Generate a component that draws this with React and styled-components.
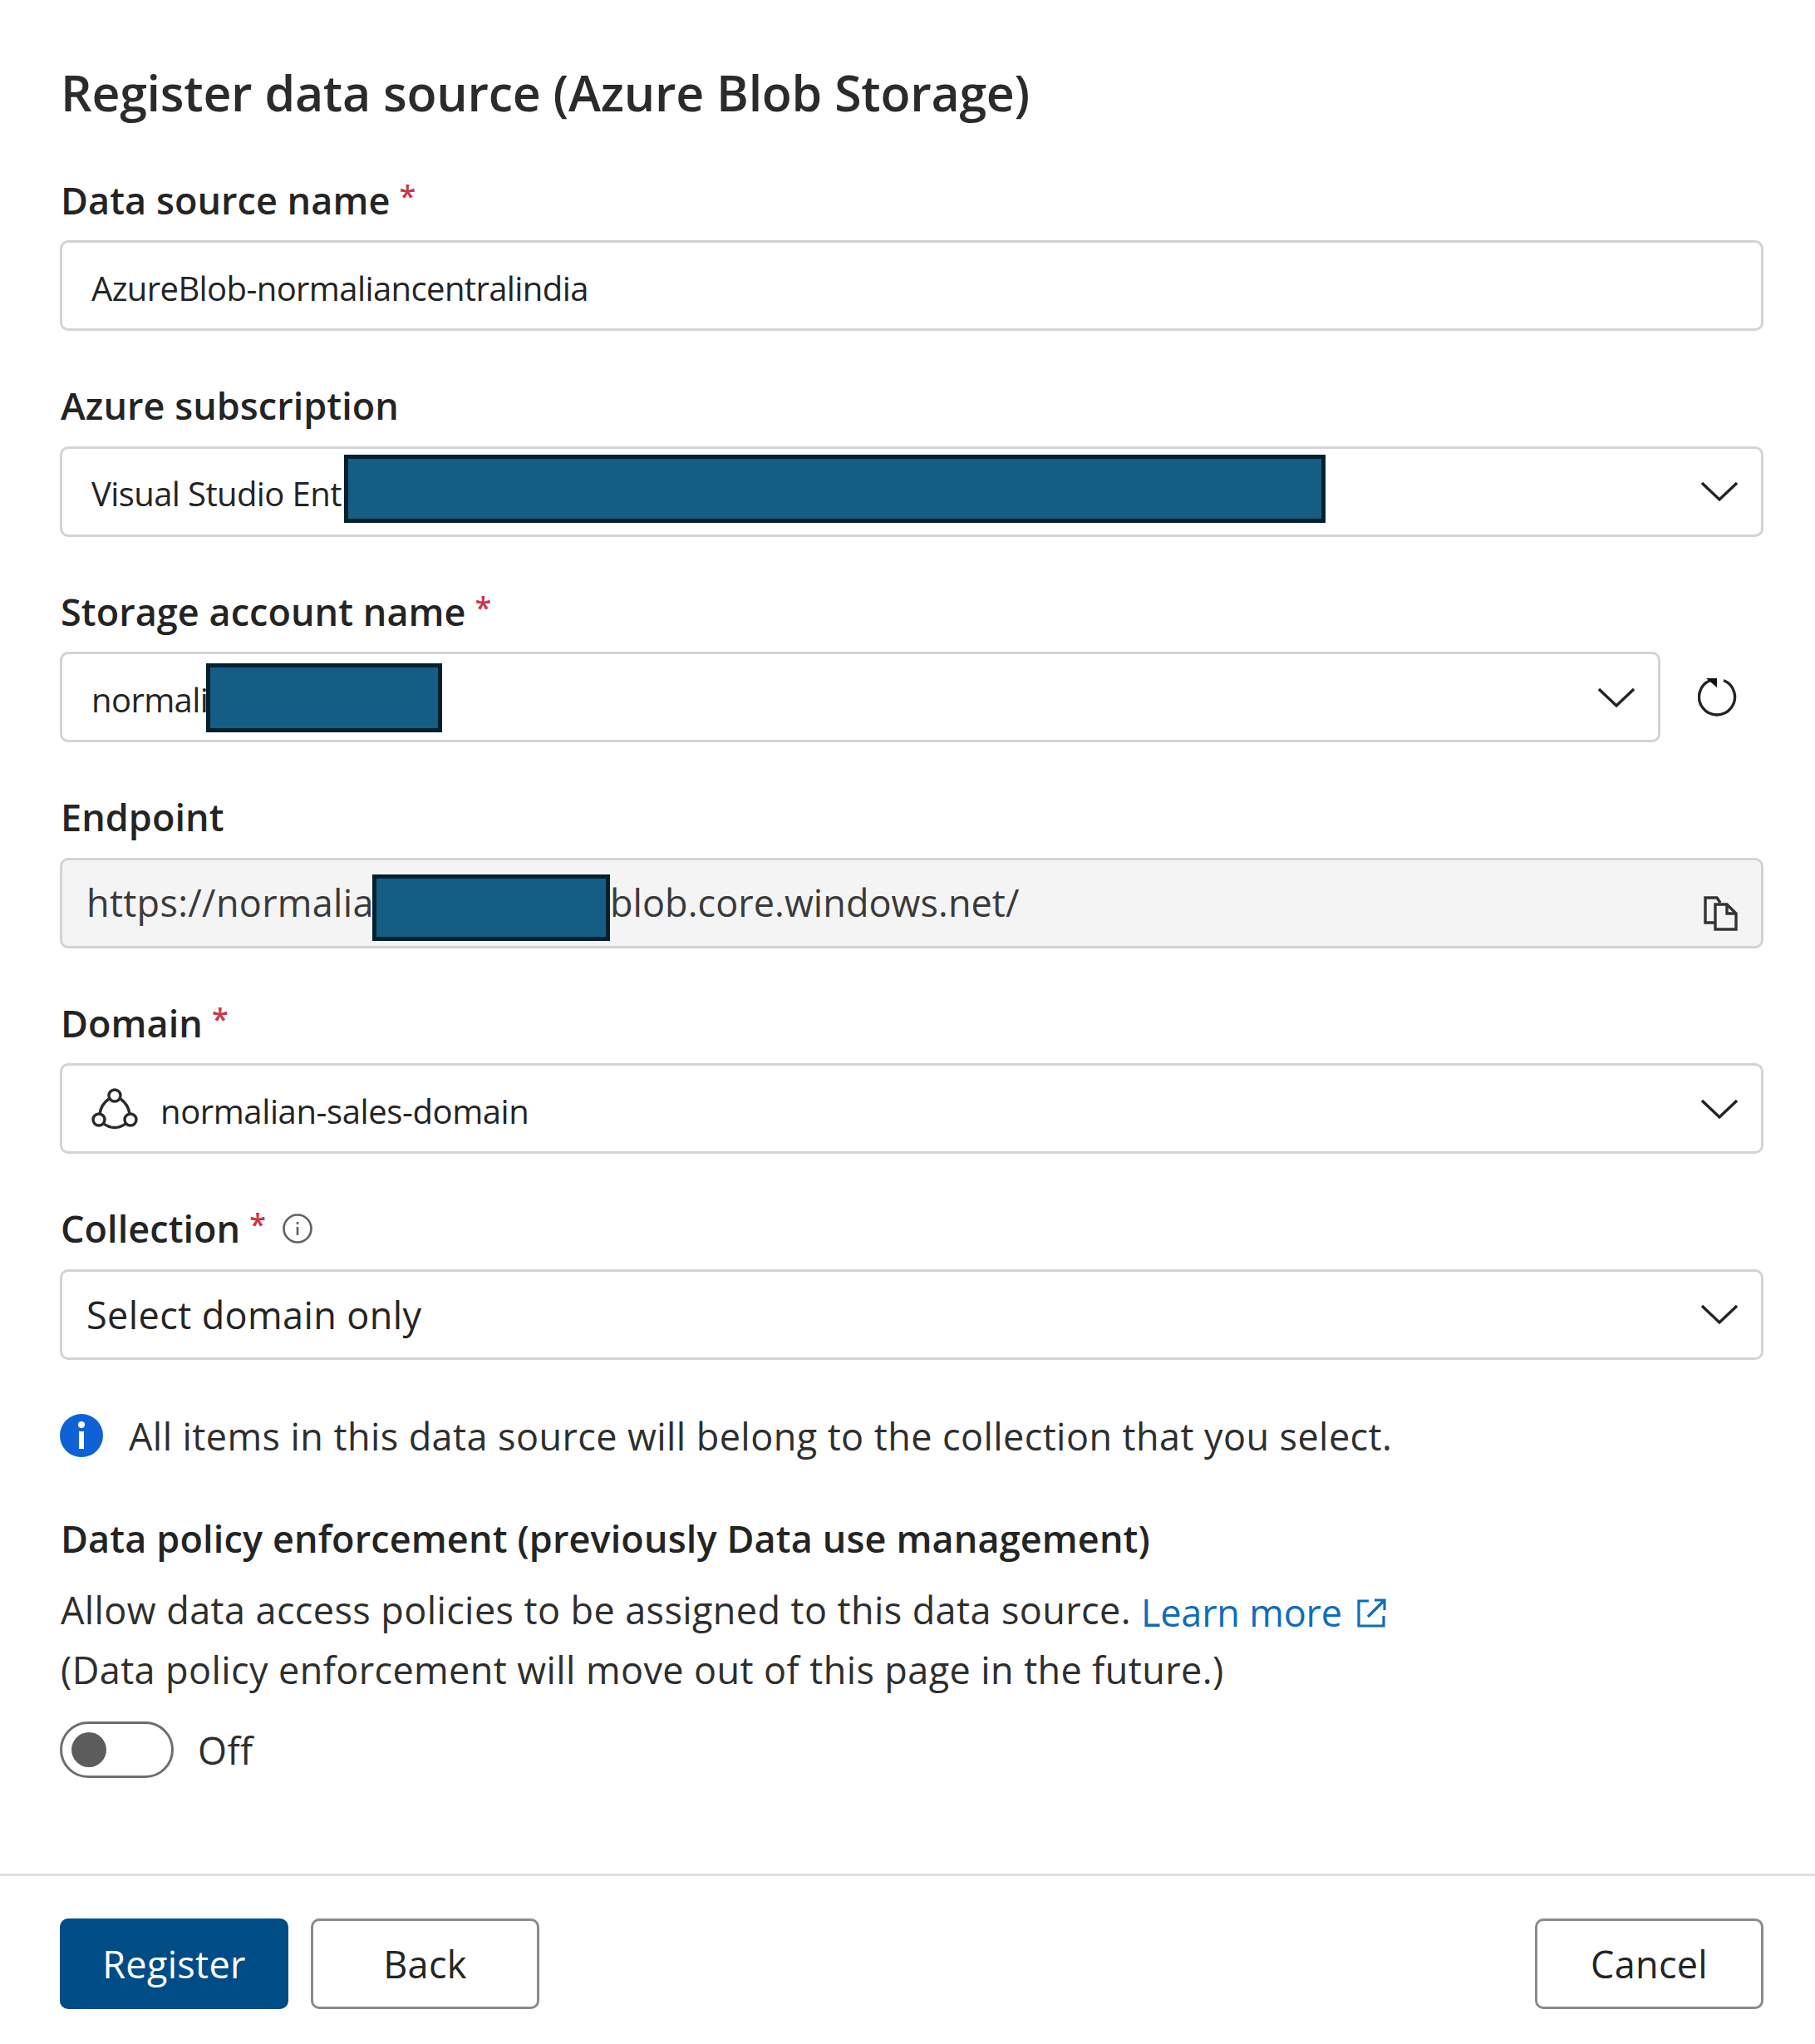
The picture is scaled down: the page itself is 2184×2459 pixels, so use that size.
import React from "react";
import styled, { createGlobalStyle } from "styled-components";

const Global = createGlobalStyle`
  html, body { margin: 0; padding: 0; background: #fff; }
  * { box-sizing: border-box; }
  body { font-family: "Open Sans", "Noto Sans", "Liberation Sans", sans-serif; color: #242424; }
`;

const Page = styled.div`
  width: 2184px;
  height: 2459px;
  background: #fff;
  overflow: hidden;
`;
const Body = styled.div`
  padding: 78px 62px 0 72px;
`;
const Title = styled.h1`
  margin: 0 0 71px 1px;
  font-size: 59px;
  line-height: 66px;
  font-weight: 600;
  color: #2b2b2b;
  letter-spacing: -0.25px;
`;
const Group = styled.div`
  margin-bottom: ${(p) => p.$after || 64.5}px;
`;
const Label = styled.label`
  display: flex;
  align-items: center;
  height: 50px;
  margin: 0 0 24px 1px;
  font-size: 45px;
  font-weight: 600;
  color: #242424;
  letter-spacing: 0.05px;
`;
const Star = styled.span`
  color: #c8374a;
  margin-left: 11px;
  position: relative;
  top: -5px;
  font-size: 36px;
`;
const SelectRow = styled.div`
  display: flex;
  align-items: center;
  gap: 45px;
`;
const Field = styled.div`
  position: relative;
  flex: 1;
  height: 109px;
  display: flex;
  align-items: center;
  gap: ${(p) => p.$gap || 0}px;
  padding: 0 28px 0 ${(p) => p.$left || 35}px;
  border: 3px solid #d3d3d3;
  border-radius: 10px;
  background: ${(p) => (p.$muted ? "#f4f4f4" : "#fff")};
  font-size: ${(p) => p.$size || 40}px;
  color: ${(p) => (p.$muted ? "#3a3a3a" : "#242424")};
  letter-spacing: ${(p) => p.$track ?? -0.6}px;
`;
const Value = styled.span`
  flex: 1;
  white-space: nowrap;
  padding-top: ${(p) => p.$drop || 0}px;
  margin-top: ${(p) => p.$lift || 0}px;
`;
const Suffix = styled.span`
  position: absolute;
  left: 659px;
  margin-top: -2px;
  white-space: nowrap;
  letter-spacing: 0.05px;
`;
const Redaction = styled.div`
  position: absolute;
  background: #155e83;
  border: 5px solid #04202f;
`;
const Icon = styled.svg`
  flex: none;
  display: block;
`;
const CopyIcon = styled(Icon)`
  margin: 26px 0 0 0;
`;
const InfoOutlineIcon = styled(Icon)`
  margin-left: 20px;
`;
const RefreshButton = styled.button`
  flex: none;
  width: 49px;
  height: 49px;
  margin-right: 30px;
  padding: 0;
  border: 0;
  background: none;
`;
const Note = styled.div`
  display: flex;
  align-items: center;
  gap: 31px;
  height: 50px;
  font-size: 45px;
  letter-spacing: 0.42px;
  color: #2e2e2e;
`;
const Heading = styled.h2`
  margin: 74px 0 25px 1px;
  font-size: 45px;
  line-height: 50px;
  font-weight: 600;
  color: #242424;
  letter-spacing: 0.13px;
`;
const Para = styled.p`
  margin: 0 0 0 1px;
  font-size: 45px;
  line-height: 72px;
  letter-spacing: 0.4px;
  color: #2e2e2e;
`;
const Link = styled.a`
  color: #0f6cbd;
  display: inline-flex;
  align-items: center;
  gap: 18px;
  line-height: 40px;
  letter-spacing: -0.2px;
  vertical-align: -3px;
`;
const ToggleRow = styled.div`
  display: flex;
  align-items: center;
  gap: 29px;
  margin-top: 26px;
  font-size: 45px;
  letter-spacing: 0.4px;
  color: #2e2e2e;
`;
const Track = styled.div`
  width: 137px;
  height: 68px;
  border: 3px solid #6e6e6e;
  border-radius: 34px;
  padding: 10px 11px;
`;
const Knob = styled.div`
  width: 42px;
  height: 42px;
  border-radius: 50%;
  background: #5c5c5c;
`;
const Footer = styled.div`
  margin-top: 115px;
  border-top: 3px solid #e0e0e0;
  padding: 51px 62px 0 72px;
  display: flex;
  gap: 27px;
`;
const Button = styled.button`
  width: 275px;
  height: 109px;
  border-radius: 10px;
  font: 400 45px "Open Sans", sans-serif;
  letter-spacing: 0.3px;
  border: 3px solid ${(p) => (p.$primary ? "#004c87" : "#8a8a8a")};
  background: ${(p) => (p.$primary ? "#004c87" : "#fff")};
  color: ${(p) => (p.$primary ? "#fff" : "#242424")};
  margin-left: ${(p) => (p.$end ? "auto" : 0)};
`;

const Chevron = () => (
  <Icon width="44" height="26" viewBox="0 0 44 26" fill="none" stroke="#242424" strokeWidth="3.4">
    <path d="M1 3l21 20 21-20" />
  </Icon>
);

const Refresh = () => (
  <Icon width="49" height="49" viewBox="0 0 49 49" fill="none" stroke="#242424" strokeWidth="3.4">
    <path d="M31 4.5a21.5 21.5 0 1 1-16 0" />
    <path d="M10 2h13v11z" fill="#111" stroke="none" />
  </Icon>
);

const Copy = () => (
  <CopyIcon width="41" height="42" viewBox="0 0 41 42" fill="none" stroke="#333" strokeWidth="3.4">
    <path d="M13 32H2V2h14l4 6" />
    <path d="M14 10h14l11 11v19H14z" fill="#f4f4f4" />
    <path d="M28 10v11h11" />
  </CopyIcon>
);

const DomainIcon = () => (
  <Icon width="56" height="50" viewBox="0 0 56 50" fill="none" stroke="#2b2b2b" strokeWidth="3.4">
    <circle cx="28" cy="9" r="7" />
    <circle cx="9" cy="38" r="7" />
    <circle cx="47" cy="38" r="7" />
    <path d="M21 13C14 18 11 24 10 31M35 13c7 5 10 11 11 18M15 43c8 6 18 6 26 0" />
  </Icon>
);

const InfoOutline = () => (
  <InfoOutlineIcon width="36" height="36" viewBox="0 0 36 36" fill="none" stroke="#616161" strokeWidth="2.6">
    <circle cx="18" cy="18" r="16.5" />
    <path d="M18 16v10M18 10v3" />
  </InfoOutlineIcon>
);

const InfoFilled = () => (
  <Icon width="52" height="52" viewBox="0 0 52 52">
    <circle cx="26" cy="26" r="26" fill="#0f62d6" />
    <rect x="23" y="21" width="6" height="21" fill="#fff" />
    <circle cx="26" cy="13" r="4" fill="#fff" />
  </Icon>
);

const External = () => (
  <Icon width="35" height="35" viewBox="0 0 35 35" fill="none" stroke="#0f6cbd" strokeWidth="3.2">
    <path d="M14 3H2v30h30V21" />
    <path d="M13 22L33 2M21 2h12v12" />
  </Icon>
);

export default function App() {
  return (
    <Page>
      <Global />
      <Body>
        <Title>Register data source (Azure Blob Storage)</Title>

        <Group>
          <Label>Data source name<Star>*</Star></Label>
          <Field><Value $drop={5}>AzureBlob-normaliancentralindia</Value></Field>
        </Group>

        <Group>
          <Label>Azure subscription</Label>
          <Field>
            <Value $drop={5}>Visual Studio Ent</Value>
            <Chevron />
            <Redaction style={{ left: 339, top: 7, width: 1181, height: 82 }} />
          </Field>
        </Group>

        <Group>
          <Label>Storage account name<Star>*</Star></Label>
          <SelectRow>
            <Field>
              <Value $drop={5}>normali</Value>
              <Chevron />
              <Redaction style={{ left: 173, top: 11, width: 284, height: 83 }} />
            </Field>
            <RefreshButton aria-label="Refresh"><Refresh /></RefreshButton>
          </SelectRow>
        </Group>

        <Group>
          <Label>Endpoint</Label>
          <Field $muted $left={29} $size={45} $track={0.3}>
            <Value $lift={-2}>https://normalia</Value>
            <Suffix>blob.core.windows.net/</Suffix>
            <Copy />
            <Redaction style={{ left: 373, top: 17, width: 286, height: 80 }} />
          </Field>
        </Group>

        <Group>
          <Label>Domain<Star>*</Star></Label>
          <Field $gap={27} $track={-0.4}>
            <DomainIcon />
            <Value $drop={6}>normalian-sales-domain</Value>
            <Chevron />
          </Field>
        </Group>

        <Group $after={66.5}>
          <Label>Collection<Star>*</Star><InfoOutline /></Label>
          <Field $left={29} $size={45} $track={0.4}>
            <Value>Select domain only</Value>
            <Chevron />
          </Field>
        </Group>

        <Note>
          <InfoFilled />
          <span>All items in this data source will belong to the collection that you select.</span>
        </Note>

        <Heading>Data policy enforcement (previously Data use management)</Heading>
        <Para>
          Allow data access policies to be assigned to this data source.{" "}
          <Link>Learn more <External /></Link>
          <br />
          (Data policy enforcement will move out of this page in the future.)
        </Para>

        <ToggleRow>
          <Track><Knob /></Track>
          <span>Off</span>
        </ToggleRow>
      </Body>

      <Footer>
        <Button $primary>Register</Button>
        <Button>Back</Button>
        <Button $end>Cancel</Button>
      </Footer>
    </Page>
  );
}
